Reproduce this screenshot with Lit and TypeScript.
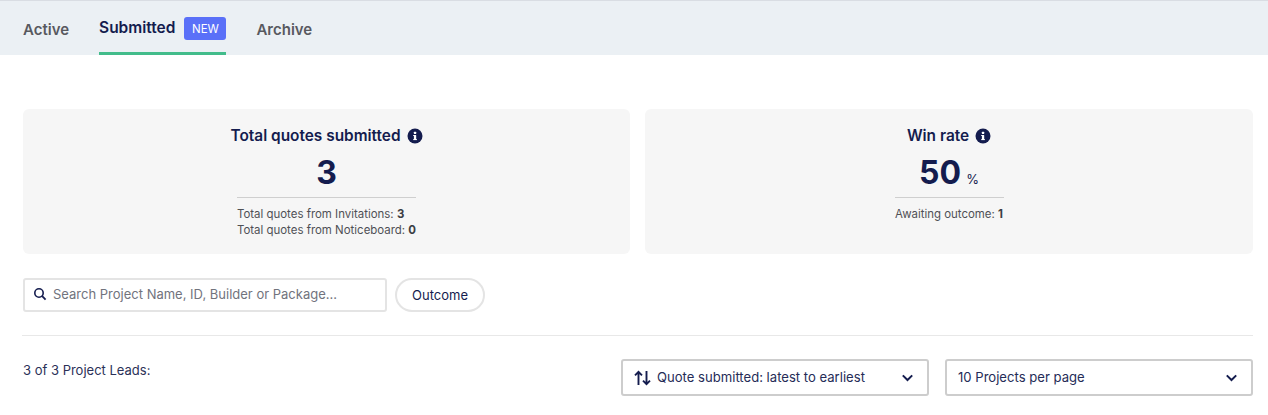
import { LitElement, html, css } from "lit";
import { customElement } from "lit/decorators.js";

const info = html`<svg class="info" viewBox="0 0 16 16" width="16" height="16"><circle cx="8" cy="8" r="7.5" fill="#141c4e"/><rect x="6.9" y="7" width="2.3" height="5" rx=".3" fill="#fff"/><rect x="6.9" y="3.8" width="2.3" height="2.1" rx=".5" fill="#fff"/><rect x="6.2" y="7" width="2" height="1" fill="#fff"/><rect x="6.2" y="11.1" width="3.7" height="1" fill="#fff"/></svg>`;
const chevron = html`<svg class="chev" viewBox="0 0 12 8" width="13" height="8"><path d="M1.3 1.4 6 6l4.7-4.6" fill="none" stroke="#141c4e" stroke-width="2"/></svg>`;

@customElement("app-root")
export class AppRoot extends LitElement {
  static styles = css`
    :host { display: block; width: 1268px; height: 415px; overflow: hidden; background: #fff; color: #141c4e; font-family: Inter, "Liberation Sans", sans-serif; }
    * { box-sizing: border-box; }
    .tabs { height: 55px; background: #ebf0f4; border-top: 1px solid #d9dde3; display: flex; gap: 30px; padding-left: 23px; }
    .tab { height: 54px; font-size: 15px; font-weight: 600; color: #58595f; display: flex; align-items: center; padding-top: 2px; }
    .tab.on { color: #141c4e; gap: 9px; border-bottom: 3px solid #42bc8b; font-size: 15.5px; }
    .badge { width: 42px; height: 23px; border-radius: 3px; background: #5a70f8; color: #fff; font-size: 11.5px; font-weight: 400; display: flex; align-items: center; justify-content: center; margin-top: 2px; }
    main { padding: 54px 15px 0 23px; }
    .cards { display: grid; grid-template-columns: 607px 608px; gap: 15px; }
    .card { height: 145px; background: #f6f6f6; border-radius: 6px; display: flex; flex-direction: column; align-items: center; padding-top: 18px; }
    .title { display: flex; align-items: center; gap: 6px; font-size: 15.4px; font-weight: 600; line-height: 18px; height: 18px; }
    .info { flex: none; }
    .stat { display: flex; align-items: baseline; justify-content: center; gap: 5px; height: 34px; margin-top: 11px; font-size: 32px; font-weight: 700; line-height: 34px; }
    .stat small { font-size: 13px; font-weight: 400; }
    .rule { height: 1px; background: #cfcfcf; margin-top: 7px; }
    .details { font-size: 11.45px; line-height: 16px; color: #4f5055; margin-top: 8px; }
    .details b { color: #3d3e44; font-weight: 700; }
    .r1 { width: 179px; }
    .r2 { width: 109px; }
    .filters { display: flex; gap: 8px; margin-top: 24px; }
    .search { width: 364px; height: 34px; border: 2px solid #e4e4e4; border-radius: 3px; display: flex; align-items: center; gap: 6px; padding: 0 0 2px 8px; font-size: 13px; color: #71737d; }
    .pill { width: 90px; height: 34px; border: 2px solid #e4e4e4; border-radius: 17px; display: flex; align-items: center; justify-content: center; padding-bottom: 1px; font-size: 13px; color: #141c4e; }
    .divider { height: 1px; background: #e8e8e8; margin: 23px 0 0 -1px; }
    .bar { display: flex; align-items: flex-start; margin-top: 23px; }
    .count { flex: 1; font-size: 13px; line-height: 16px; color: #2b3158; margin-top: 3px; }
    .selects { display: flex; gap: 16px; }
    .select { width: 308px; height: 37px; border: 2px solid #cdcdcd; border-radius: 3px; display: flex; align-items: center; padding: 0 11px 1px; font-size: 13.1px; color: #252c57; gap: 6px; }
    .select span { flex: 1; }
    .select svg { margin-top: 1px; }
    .select .chev { margin-right: 2px; }
  `;

  render() {
    return html`
      <nav class="tabs">
        <div class="tab">Active</div>
        <div class="tab on">Submitted <div class="badge">NEW</div></div>
        <div class="tab">Archive</div>
      </nav>
      <main>
        <section class="cards">
          <div class="card">
            <div class="title">Total quotes submitted ${info}</div>
            <div class="stat">3</div>
            <div class="rule r1"></div>
            <div class="details">
              <div>Total quotes from Invitations: <b>3</b></div>
              <div>Total quotes from Noticeboard: <b>0</b></div>
            </div>
          </div>
          <div class="card">
            <div class="title">Win rate ${info}</div>
            <div class="stat">50 <small>%</small></div>
            <div class="rule r2"></div>
            <div class="details"><div>Awaiting outcome: <b>1</b></div></div>
          </div>
        </section>
        <section class="filters">
          <div class="search">
            <svg viewBox="0 0 14 14" width="14" height="14"><circle cx="6" cy="6" r="4.2" fill="none" stroke="#141c4e" stroke-width="1.6"/><path d="m9.2 9.2 3.4 3.4" stroke="#141c4e" stroke-width="1.8"/></svg>
            Search Project Name, ID, Builder or Package...
          </div>
          <div class="pill">Outcome</div>
        </section>
        <div class="divider"></div>
        <section class="bar">
          <div class="count">3 of 3 Project Leads:</div>
          <div class="selects">
            <div class="select">
              <svg viewBox="0 0 17 16" width="17" height="16"><path d="M4.5 15V2M1 5.3 4.5 1.8 8 5.3M12.5 1v13M9 10.7l3.5 3.5 3.5-3.5" fill="none" stroke="#141c4e" stroke-width="1.9"/></svg>
              <span>Quote submitted: latest to earliest</span>${chevron}
            </div>
            <div class="select"><span>10 Projects per page</span>${chevron}</div>
          </div>
        </section>
      </main>
    `;
  }
}
